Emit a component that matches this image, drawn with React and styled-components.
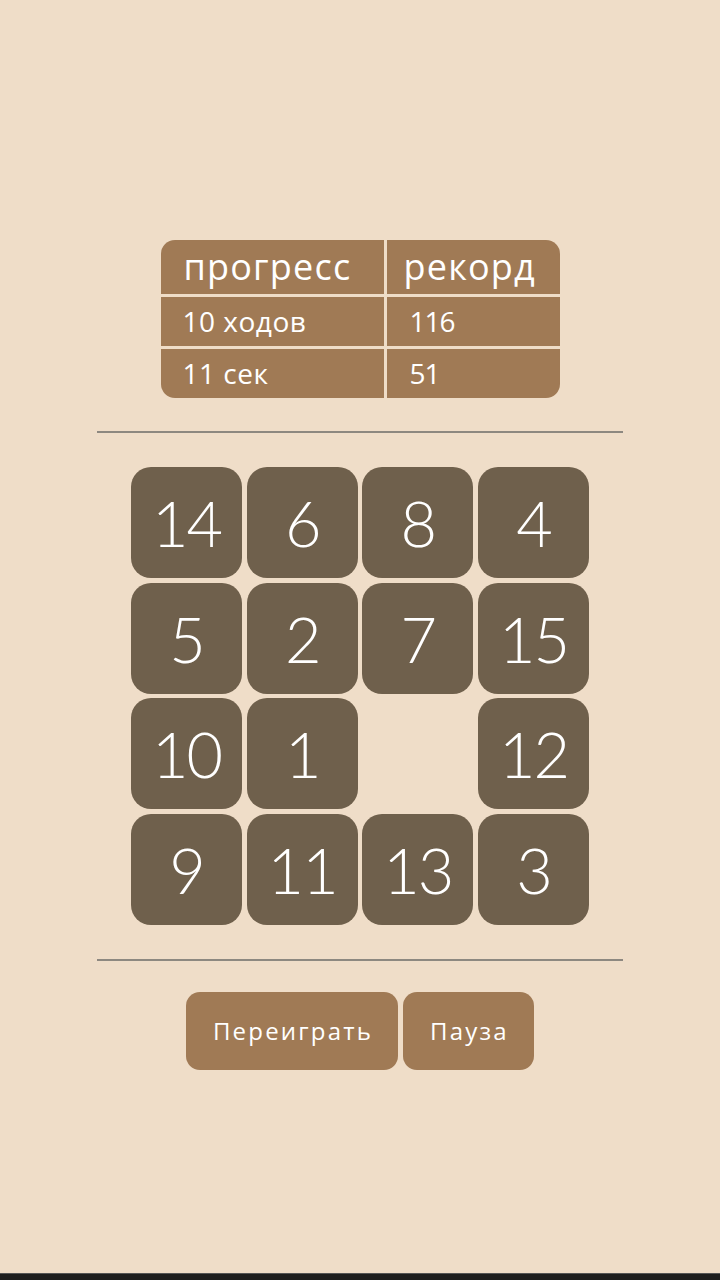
import React from "react";
import styled, { createGlobalStyle } from "styled-components";

const Global = createGlobalStyle`
  html, body { margin: 0; padding: 0; height: 100%; }
  body { background: #efddc8; font-family: "Open Sans", "DejaVu Sans", sans-serif; }
  #root { min-height: 100%; }
`;

const Page = styled.div`
  min-height: 100vh;
  display: flex;
  flex-direction: column;
  align-items: center;
  box-sizing: border-box;
  padding-top: 240px;
`;

const Stats = styled.div`
  display: grid;
  grid-template-columns: 223px 173px;
  grid-template-rows: 54px 49px 49px;
  gap: 3px;
  border-radius: 14px;
  overflow: hidden;
`;

const Cell = styled.div`
  background: #a07a55;
  color: #fff;
  display: flex;
  align-items: center;
  padding-left: ${(p) => p.$pad}px;
  padding-bottom: ${(p) => (p.$head ? 0 : 2)}px;
  font-size: ${(p) => (p.$head ? 36 : 28)}px;
  font-weight: ${(p) => (p.$head ? 500 : 400)};
  letter-spacing: ${(p) => (p.$head ? 1.2 : p.$num ? -1 : 0.5)}px;
  line-height: 1;
`;

const Divider = styled.div`
  width: 526px;
  height: 2px;
  background: #8d8880;
  margin-top: ${(p) => p.$top}px;
`;

const Board = styled.div`
  margin-top: 34px;
  width: 458px;
  display: grid;
  grid-template-columns: repeat(4, 111px);
  grid-auto-rows: 111px;
  column-gap: 4.67px;
  row-gap: 4.67px;
`;

const Tile = styled.div`
  background: ${(p) => (p.$empty ? "transparent" : "#6f604c")};
  border-radius: 20px;
  color: #fff;
  display: flex;
  align-items: center;
  justify-content: center;
  font-family: Lato, "Open Sans", sans-serif;
  font-size: 63px;
  font-weight: 300;
  letter-spacing: -2px;
  line-height: 1;
`;

const Buttons = styled.div`
  margin-top: 31px;
  display: flex;
  gap: 5px;
`;

const Button = styled.button`
  width: ${(p) => p.$w}px;
  height: 78px;
  border: none;
  border-radius: 14px;
  background: #a07a55;
  color: #fff;
  font-family: inherit;
  font-size: 24px;
  font-weight: 400;
  letter-spacing: 2.2px;
  padding: 0 0 0 2px;
`;

const NavBar = styled.div`
  margin-top: auto;
  align-self: stretch;
  height: 6px;
  background: #1e1e1e;
  border-top: 1px solid #555;
`;

const tiles = [14, 6, 8, 4, 5, 2, 7, 15, 10, 1, null, 12, 9, 11, 13, 3];

export default function App() {
  return (
    <>
      <Global />
      <Page>
        <Stats>
          <Cell $head $pad={23}>прогресс</Cell>
          <Cell $head $pad={17}>рекорд</Cell>
          <Cell $pad={22}>10 ходов</Cell>
          <Cell $num $pad={23}>116</Cell>
          <Cell $pad={22}>11 сек</Cell>
          <Cell $num $pad={23}>51</Cell>
        </Stats>
        <Divider $top={33} />
        <Board>
          {tiles.map((t, i) => (
            <Tile key={i} $empty={t === null}>{t}</Tile>
          ))}
        </Board>
        <Divider $top={34} />
        <Buttons>
          <Button $w={212}>Переиграть</Button>
          <Button $w={131}>Пауза</Button>
        </Buttons>
        <NavBar />
      </Page>
    </>
  );
}
